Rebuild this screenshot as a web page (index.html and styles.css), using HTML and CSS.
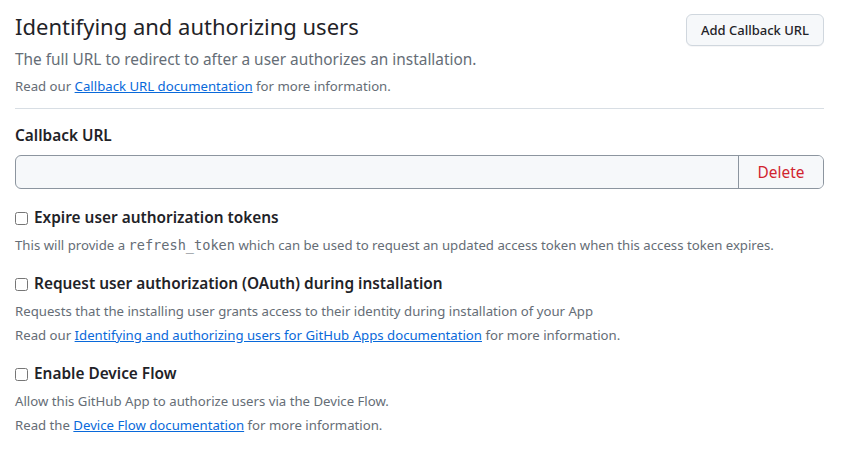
FILE: index.html
```html
<!DOCTYPE html>
<html lang="en">
<head>
<meta charset="utf-8">
<title>Identifying and authorizing users</title>
<link rel="stylesheet" href="styles.css">
</head>
<body>
<div class="page">
  <div class="header">
    <div class="header-main">
      <h2 class="title">Identifying and authorizing users</h2>
      <p class="lead">The full URL to redirect to after a user authorizes an installation.</p>
      <p class="note">Read our <a href="#">Callback URL documentation</a> for more information.</p>
    </div>
    <button class="btn" type="button">Add Callback URL</button>
  </div>
  <hr class="divider">
  <label class="field-label" for="cb">Callback URL</label>
  <div class="input-group">
    <input id="cb" class="input" type="text">
    <button class="btn-delete" type="button">Delete</button>
  </div>

  <div class="check-item first">
    <label class="check-label"><input type="checkbox" class="cb"> Expire user authorization tokens</label>
    <p class="note line">This will provide a <code>refresh_token</code> which can be used to request an updated access token when this access token expires.</p>
  </div>

  <div class="check-item">
    <label class="check-label"><input type="checkbox" class="cb"> Request user authorization (OAuth) during installation</label>
    <p class="note line">Requests that the installing user grants access to their identity during installation of your App</p>
    <p class="note line">Read our <a href="#">Identifying and authorizing users for GitHub Apps documentation</a> for more information.</p>
  </div>

  <div class="check-item">
    <label class="check-label"><input type="checkbox" class="cb"> Enable Device Flow</label>
    <p class="note line">Allow this GitHub App to authorize users via the Device Flow.</p>
    <p class="note line">Read the <a href="#">Device Flow documentation</a> for more information.</p>
  </div>
</div>
</body>
</html>
```
FILE: styles.css
```css
html, body {
  margin: 0;
  padding: 0;
  background: #ffffff;
}
body {
  font-family: "Noto Sans", "Liberation Sans", sans-serif;
  color: #1f2328;
}
.page {
  padding: 8px 18px 0 15px;
}
.header {
  display: flex;
  justify-content: space-between;
  align-items: flex-start;
}
.title {
  margin: 0;
  font-size: 22px;
  line-height: 36px;
  font-weight: 400;
  color: #1f2328;
}
.lead {
  margin: 4px 0 0;
  font-size: 15.4px;
  line-height: 24px;
  color: #656d76;
}
.note {
  margin: 4px 0 0;
  font-size: 13.2px;
  line-height: 20px;
  color: #656d76;
}
.note a {
  color: #0969da;
  text-decoration: underline;
}
.btn {
  margin-top: 6px;
  height: 32px;
  padding: 0 14px;
  font-family: "Noto Sans", "Liberation Sans", sans-serif;
  font-size: 13px;
  font-weight: 500;
  color: #1f2328;
  background: #f6f8fa;
  border: 1px solid #d0d7de;
  border-radius: 6px;
  box-shadow: 0 1px 0 rgba(31, 35, 40, 0.04);
}
.divider {
  margin: 12px 0 0;
  border: 0;
  height: 1px;
  background: #d8dee4;
}
.field-label {
  display: block;
  margin-top: 15px;
  font-size: 15.4px;
  line-height: 24px;
  font-weight: 600;
}
.input-group {
  display: flex;
  margin-top: 7px;
  height: 34px;
  border: 1px solid #8c959f;
  border-radius: 6px;
  background: #f6f8fa;
  box-sizing: border-box;
  overflow: hidden;
}
.input {
  flex: 1;
  border: 0;
  background: transparent;
  padding: 0 12px;
  font-size: 14px;
  outline: none;
}
.btn-delete {
  width: 85px;
  border: 0;
  border-left: 1px solid #8c959f;
  background: #f6f8fa;
  color: #d1242f;
  font-family: "Noto Sans", "Liberation Sans", sans-serif;
  font-size: 15.4px;
  padding: 0;
}
.check-item {
  margin-top: 15px;
}
.check-item.first {
  margin-top: 17px;
}
.check-label {
  display: flex;
  align-items: center;
  font-size: 15.4px;
  line-height: 24px;
  font-weight: 600;
}
.cb {
  margin: 0 6px 0 0;
  width: 13px;
  height: 13px;
}
.line {
  line-height: 24px;
  margin-top: 0;
}
.check-label + .line {
  margin-top: 3px;
}
code {
  font-family: "DejaVu Sans Mono", "Liberation Mono", monospace;
  font-size: 13.6px;
  color: #656d76;
}
```
